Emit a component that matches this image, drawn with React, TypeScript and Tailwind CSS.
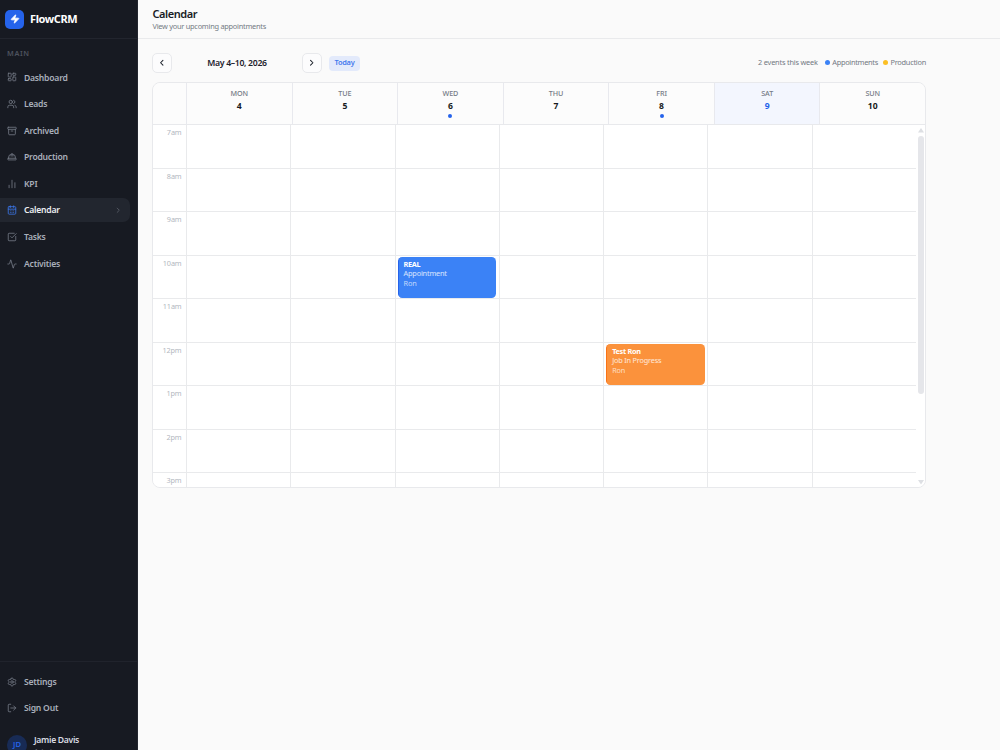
import {
  Activity,
  Archive,
  CalendarDays,
  ChartNoAxesColumn,
  ChevronLeft,
  ChevronRight,
  HardHat,
  LayoutDashboard,
  LogOut,
  Settings,
  SquareCheckBig,
  Users,
  Zap,
  type LucideIcon,
} from "lucide-react";
import clsx from "clsx";

type NavEntry = { label: string; icon: LucideIcon; active?: boolean };

const NAV: NavEntry[] = [
  { label: "Dashboard", icon: LayoutDashboard },
  { label: "Leads", icon: Users },
  { label: "Archived", icon: Archive },
  { label: "Production", icon: HardHat },
  { label: "KPI", icon: ChartNoAxesColumn },
  { label: "Calendar", icon: CalendarDays, active: true },
  { label: "Tasks", icon: SquareCheckBig },
  { label: "Activities", icon: Activity },
];

const FOOTER_NAV: NavEntry[] = [
  { label: "Settings", icon: Settings },
  { label: "Sign Out", icon: LogOut },
];

const DAYS = [
  { name: "MON", date: 4 },
  { name: "TUE", date: 5 },
  { name: "WED", date: 6, hasEvents: true },
  { name: "THU", date: 7 },
  { name: "FRI", date: 8, hasEvents: true },
  { name: "SAT", date: 9, today: true },
  { name: "SUN", date: 10 },
];

const HOURS = ["7am", "8am", "9am", "10am", "11am", "12pm", "1pm", "2pm", "3pm"];

const EVENTS = [
  {
    date: 6,
    hour: "10am",
    title: "REAL",
    type: "Appointment",
    owner: "Ron",
    color: "bg-[#3b82f6] border-[#2563eb]",
  },
  {
    date: 8,
    hour: "12pm",
    title: "Test Ron",
    type: "Job In Progress",
    owner: "Ron",
    color: "bg-[#fb923c] border-[#f97316]",
  },
];

function NavItem({ label, icon: Icon, active }: NavEntry) {
  return (
    <a
      className={clsx(
        "flex h-[24.2px] w-[130px] items-center rounded-r-[7px] pl-[7px] pr-2 text-[8.6px] font-semibold tracking-[-0.23px]",
        active ? "bg-[#22262f] text-[#eceef2]" : "text-[#a9afbb]",
      )}
    >
      <Icon
        size={10}
        strokeWidth={2}
        className={clsx("mr-[7px] shrink-0", active ? "text-[#3b76e8]" : "text-[#747985]")}
      />
      <span className="flex-1 pt-[1px]">{label}</span>
      {active && <ChevronRight size={8.5} className="text-[#636873]" />}
    </a>
  );
}

function Sidebar() {
  return (
    <aside className="flex h-full w-[138px] shrink-0 flex-col overflow-hidden border-r border-[#23262f] bg-[#171a22]">
      <div className="flex h-[39px] shrink-0 items-center border-b border-[#22252e] pl-[5px]">
        <div className="flex size-[19px] items-center justify-center rounded-[5px] bg-[#2563eb]">
          <Zap size={10} className="fill-white text-white" />
        </div>
        <span className="ml-[6px] pt-[1px] text-[11px] font-bold tracking-[-0.4px] text-white">FlowCRM</span>
      </div>

      <div className="flex flex-1 flex-col pt-[8px]">
        <div className="h-[12px] pl-[7px] text-[7.3px] leading-[12px] font-semibold tracking-[0.6px] text-[#4d525e]">
          MAIN
        </div>
        <nav className="mt-[6.4px] flex flex-col gap-[2.4px]">
          {NAV.map((item) => (
            <NavItem key={item.label} {...item} />
          ))}
        </nav>
      </div>

      <div className="h-[89px] shrink-0 border-t border-[#20232c] pt-[7.5px]">
        <div className="flex flex-col gap-[2.4px]">
          {FOOTER_NAV.map((item) => (
            <NavItem key={item.label} {...item} />
          ))}
        </div>
        <div className="mt-[13.5px] flex items-start pl-[7px]">
          <div className="mt-[1px] flex size-[20px] items-center justify-center rounded-full bg-[#182b55] text-[7.6px] font-semibold text-[#2563eb]">
            JD
          </div>
          <div className="ml-[7px] text-[8.6px] leading-[12px] font-semibold text-[#d9dce2]">
            <div className="tracking-[-0.3px]">Jamie Davis</div>
            <div className="text-[7.3px] leading-[10px] font-normal text-[#6b7280]">Admin</div>
          </div>
        </div>
      </div>
    </aside>
  );
}

function Toolbar() {
  return (
    <div className="flex h-[20px] items-center text-[#1c212b]">
      <button className="flex size-[20px] items-center justify-center rounded-[5px] border border-[#e8e9ec] bg-[#fcfcfd]">
        <ChevronLeft size={9.5} strokeWidth={2.6} />
      </button>
      <span className="w-[130px] pt-[1.5px] text-center text-[8.7px] font-semibold tracking-[-0.33px]">
        May 4–10, 2026
      </span>
      <button className="flex size-[20px] items-center justify-center rounded-[5px] border border-[#e8e9ec] bg-[#fcfcfd]">
        <ChevronRight size={9.5} strokeWidth={2.6} />
      </button>
      <button className="ml-[7px] h-[15px] w-[31px] rounded-[4px] bg-[#e3eafb] text-[7.4px] font-semibold tracking-[-0.25px] text-[#4479ee]">
        Today
      </button>
      <div className="ml-auto flex items-center text-[7.4px] tracking-[-0.3px] text-[#737983]">
        <span className="tracking-[-0.21px]">2 events this week</span>
        <span className="mr-[2.5px] ml-[7px] size-[5px] rounded-full bg-[#3b82f6]" />
        <span className="tracking-[-0.3px]">Appointments</span>
        <span className="mr-[2.5px] ml-[5px] size-[5px] rounded-full bg-[#fbbf24]" />
        <span className="tracking-[-0.26px]">Production</span>
      </div>
    </div>
  );
}

function WeekHeader() {
  return (
    <div className="flex h-[42px] shrink-0 border-b border-[#e8e9ec] bg-[#fcfcfc]">
      <div className="w-[33px] shrink-0" />
      <div className="grid flex-1 grid-cols-7">
        {DAYS.map((day) => (
          <div
            key={day.name}
            className={clsx(
              "flex flex-col items-center border-l border-[#e8e9ee] pt-[5px]",
              day.today && "bg-[#f3f6fe]",
            )}
          >
            <span className="text-[7.2px] leading-[11px] font-medium tracking-[-0.1px] text-[#757b86]">{day.name}</span>
            <span
              className={clsx(
                "mt-[1px] text-[8.6px] leading-[12px] font-bold",
                day.today ? "text-[#2563eb]" : "text-[#171a21]",
              )}
            >
              {day.date}
            </span>
            {day.hasEvents && <span className="mt-[1.5px] size-[4px] rounded-full bg-[#2563eb]" />}
          </div>
        ))}
      </div>
    </div>
  );
}

function WeekGrid() {
  return (
    <div className="flex min-h-0 flex-1 bg-white">
      <div className="flex-1 overflow-hidden">
        {HOURS.map((hour) => (
          <div key={hour} className="flex h-[43.55px] border-b border-[#e9eaec]">
            <div className="w-[33px] shrink-0 pt-[2px] pr-[4.5px] text-right text-[7.3px] leading-[11px] tracking-[-0.15px] text-[#b2b7c0]">
              {hour}
            </div>
            <div className="grid flex-1 grid-cols-7">
              {DAYS.map((day) => {
                const event = EVENTS.find((e) => e.date === day.date && e.hour === hour);
                return (
                  <div key={day.name} className="border-l border-[#e9eaec] pt-[1px] pr-[2.5px] pl-[2px]">
                    {event && (
                      <div
                        className={clsx(
                          "h-[41px] rounded-[4.5px] border-l pt-[3px] pl-[5px] text-[7.3px] leading-[9.7px] tracking-[-0.18px]",
                          event.color,
                        )}
                      >
                        <div className="font-bold tracking-[-0.3px] text-white">{event.title}</div>
                        <div className="text-white/80">{event.type}</div>
                        <div className="text-white/70">{event.owner}</div>
                      </div>
                    )}
                  </div>
                );
              })}
            </div>
          </div>
        ))}
      </div>
      {/* スクロールバー */}
      <div className="flex w-[9px] shrink-0 flex-col items-center pt-[3px] pb-[2px]">
        <svg width="6" height="5" viewBox="0 0 6 5" className="fill-[#dddfe3]">
          <path d="M3 0 6 4.5H0Z" />
        </svg>
        <div className="mt-[3px] h-[258px] w-[6px] rounded-full bg-[#e5e6ea]" />
        <svg width="6" height="5" viewBox="0 0 6 5" className="mt-auto fill-[#dddfe3]">
          <path d="M0 0H6L3 4.5Z" />
        </svg>
      </div>
    </div>
  );
}

export default function App() {
  return (
    <div className="flex h-[750px] w-[1000px] overflow-hidden bg-[#fafafa] font-['Noto_Sans',sans-serif]">
      <Sidebar />
      <main className="flex flex-1 flex-col">
        <header className="h-[39px] border-b border-[#e9eaec] pt-[7px] pl-[14.5px]">
          <h1 className="text-[11px] leading-[14px] font-semibold tracking-[-0.45px] text-[#181c25]">Calendar</h1>
          <p className="text-[7.4px] leading-[11px] tracking-[-0.26px] text-[#747a84]">View your upcoming appointments</p>
        </header>
        <section className="pt-[14px] pr-[74px] pl-[14px]">
          <Toolbar />
          <div className="mt-[9px] flex h-[406px] flex-col overflow-hidden rounded-[8px] border border-[#e8e9ec]">
            <WeekHeader />
            <WeekGrid />
          </div>
        </section>
      </main>
    </div>
  );
}
